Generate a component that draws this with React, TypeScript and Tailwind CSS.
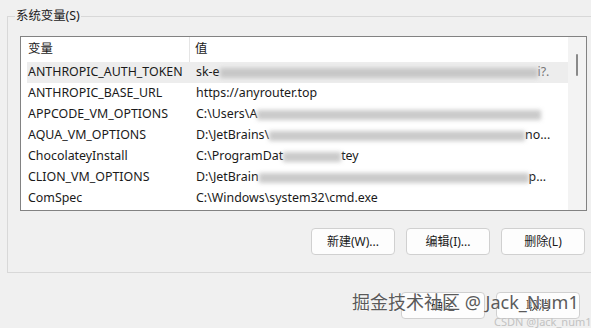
const rows: { name: string; value: React.ReactNode }[] = [
  {
    name: "ANTHROPIC_AUTH_TOKEN",
    value: (
      <>
        sk-e
        <Blur w="w-[318px]" />
        <span className="text-[#777]">i?.</span>
      </>
    ),
  },
  { name: "ANTHROPIC_BASE_URL", value: "https://anyrouter.top" },
  {
    name: "APPCODE_VM_OPTIONS",
    value: (
      <>
        C:\Users\A
        <Blur w="w-[284px]" />
      </>
    ),
  },
  {
    name: "AQUA_VM_OPTIONS",
    value: (
      <>
        D:\JetBrains\
        <Blur w="w-[256px]" />
        no...
      </>
    ),
  },
  {
    name: "ChocolateyInstall",
    value: (
      <>
        C:\ProgramDat
        <Blur w="w-[58px]" />
        tey
      </>
    ),
  },
  {
    name: "CLION_VM_OPTIONS",
    value: (
      <>
        D:\JetBrain
        <Blur w="w-[270px]" />
        p...
      </>
    ),
  },
  { name: "ComSpec", value: "C:\\Windows\\system32\\cmd.exe" },
];

function Blur({ w }: { w: string }) {
  return (
    <span
      className={`inline-block h-[10px] ${w} bg-[#bdbdbd] blur-[2px] align-middle opacity-80`}
    />
  );
}

function Btn({ children }: { children: React.ReactNode }) {
  return (
    <button className="w-[84px] h-[27px] rounded-[4px] border border-[#d0d0d0] bg-[#fdfdfd] text-[12px] text-[#1a1a1a]">
      {children}
    </button>
  );
}

export default function App() {
  return (
    <div
      className="relative w-[591px] h-[328px] overflow-hidden bg-[#f0f0f0] text-[12.4px] text-[#1a1a1a]"
      style={{ fontFamily: '"Segoe UI", "Noto Sans", "Noto Sans CJK SC", sans-serif' }}
    >
      {/* group box */}
      <fieldset className="ml-[7px] mt-[7px] w-[600px] border border-[#d8d8d8] pb-[17px]">
        <legend className="ml-[7px] px-[1px] leading-[18px]">系统变量(S)</legend>

        <div className="ml-[12px] mt-[11px] w-[567px] h-[175px] border border-[#828282] bg-white flex">
          <div className="flex-1 flex flex-col">
            <div className="h-[25px] flex items-center bg-white">
              <div className="w-[169px] pl-[7px] h-full flex items-center border-r border-[#e5e5e5]">变量</div>
              <div className="pl-[5px]">值</div>
            </div>
            {rows.map((r, i) => (
              <div
                key={r.name}
                className={`h-[21px] flex items-center whitespace-nowrap ${i === 0 ? "bg-[#ededed] ml-[6px]" : ""}`}
              >
                <div className={`${i === 0 ? "w-[164px] pl-[1px]" : "w-[170px] pl-[7px]"}`}>{r.name}</div>
                <div className="pl-[5px]">{r.value}</div>
              </div>
            ))}
          </div>
          {/* scrollbar */}
          <div className="w-[18px] bg-[#f3f3f3] flex justify-center pt-[17px]">
            <div className="w-[2px] h-[22px] rounded-full bg-[#8a8a8a]" />
          </div>
        </div>

        <div className="mt-[17px] flex justify-end gap-[11px] w-[577px]">
          <Btn>新建(W)...</Btn>
          <Btn>编辑(I)...</Btn>
          <Btn>删除(L)</Btn>
        </div>
      </fieldset>

      <div className="mt-[19px] flex justify-end gap-[11px] pr-[11px]">
        <Btn>确定</Btn>
        <Btn>取消</Btn>
      </div>

      {/* watermarks */}
      <div
        className="absolute left-[352px] top-[289px] text-[18px] text-[#5a5a5a] whitespace-nowrap"
        style={{ textShadow: "0 0 2px #fff, 0 0 1px #fff" }}
      >
        掘金技术社区 @ Jack_Num1
      </div>
      <div className="absolute left-[494px] top-[314px] text-[11px] text-[#c2c2c2] whitespace-nowrap">
        CSDN @Jack_num1
      </div>
    </div>
  );
}
